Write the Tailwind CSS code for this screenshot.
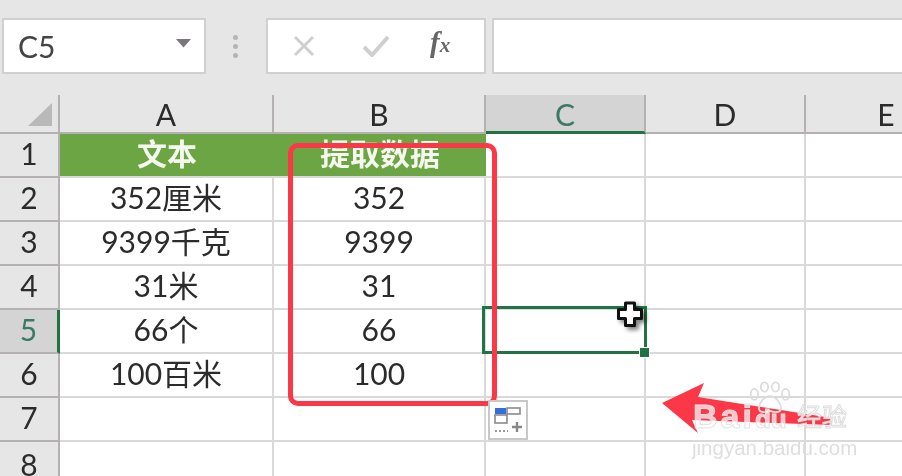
<!DOCTYPE html>
<html lang="zh">
<head>
<meta charset="utf-8">
<title>Excel</title>
<script src="https://cdn.jsdelivr.net/npm/@tailwindcss/browser@4"></script>
</head>
<body class="overflow-hidden">
<div class="relative w-[902px] h-[476px] overflow-hidden bg-white text-[#2b2b2b] text-[30px] font-['Lato','Noto_Sans_CJK_SC',sans-serif] blur-[0.6px]">

  <!-- formula bar -->
  <div class="h-[95px] bg-[#e6e6e6] pt-[18px] flex items-start">
    <div class="ml-[2px] w-[204px] h-[56px] bg-white border-2 border-[#d0d0d0] flex items-center justify-between pl-[14px] pr-[13px] text-[#444]">
      <span>C5</span>
      <svg class="mb-[6px]" width="15" height="9" viewBox="0 0 15 9"><path d="M0 0H15L7.5 8.5Z" fill="#7a767c"/></svg>
    </div>
    <div class="w-[60px] h-[56px] flex flex-col items-center justify-center gap-[4px] pr-[1px]">
      <i class="w-[5px] h-[5px] rounded-full bg-[#b5b5b5]"></i>
      <i class="w-[5px] h-[5px] rounded-full bg-[#b5b5b5]"></i>
      <i class="w-[5px] h-[5px] rounded-full bg-[#b5b5b5]"></i>
    </div>
    <div class="w-[220px] h-[56px] bg-white border-2 border-[#d0d0d0] flex items-center pl-[24px] gap-[46px]">
      <svg width="24" height="22" viewBox="0 0 24 22"><path d="M3 2L21 20M21 2L3 20" stroke="#cfcfcf" stroke-width="3" fill="none"/></svg>
      <svg width="28" height="22" viewBox="0 0 28 22"><path d="M2 12L10 20L26 2" stroke="#cfcfcf" stroke-width="4" fill="none"/></svg>
      <span class="ml-[-6px] mt-[-6px] text-[29px] font-bold italic text-[#666] font-['Liberation_Serif',serif]">f<span class="text-[21px]">x</span></span>
    </div>
    <div class="ml-[6px] flex-1 h-[56px] bg-white border-2 border-r-0 border-[#d0d0d0]"></div>
  </div>

  <!-- sheet -->
  <div class="grid grid-cols-[60px_214px_212px_160px_160px_160px] grid-rows-[39px_repeat(7,44px)] [&>div]:pb-[4px] [&>div:nth-child(-n+6)]:pb-0 [&>div:nth-child(-n+6)]:pt-[2px]">
    <!-- column headers -->
    <div class="bg-[#e6e6e6] border-r-2 border-b-2 border-[#b4b0b4] flex items-end justify-end pr-[6px]">
      <svg class="mb-[6px]" width="24" height="23" viewBox="0 0 24 23"><path d="M24 0V23H0Z" fill="#b9b9b9"/></svg>
    </div>
    <div class="bg-[#e6e6e6] border-r-2 border-b-2 border-[#b4b0b4] flex items-center justify-center">A</div>
    <div class="bg-[#e6e6e6] border-r-2 border-b-2 border-[#b4b0b4] flex items-center justify-center">B</div>
    <div class="bg-[#d4d4d4] border-r-2 border-[#b4b0b4] border-b-[3px] border-b-[#217346] flex items-center justify-center text-[#3c7a63]">C</div>
    <div class="bg-[#e6e6e6] border-r-2 border-b-2 border-[#b4b0b4] flex items-center justify-center">D</div>
    <div class="bg-[#e6e6e6] border-b-2 border-[#b4b0b4] flex items-center justify-center">E</div>

    <!-- row 1 -->
    <div class="bg-[#e6e6e6] border-r-2 border-b-2 border-[#b4b0b4] flex items-center justify-center">1</div>
    <div class="bg-[#6ca644] border-b-2 border-[#d9d9d9] flex items-center justify-center text-[#f6f8f0] font-bold">文本</div>
    <div class="bg-[#6ca644] border-b-2 border-[#d9d9d9] flex items-center justify-center text-[#f6f8f0] font-bold">提取数据</div>
    <div class="border-r-2 border-b-2 border-[#d9d9d9]"></div>
    <div class="border-r-2 border-b-2 border-[#d9d9d9]"></div>
    <div class="border-b-2 border-[#d9d9d9]"></div>

    <!-- row 2 -->
    <div class="bg-[#e6e6e6] border-r-2 border-b-2 border-[#b4b0b4] flex items-center justify-center">2</div>
    <div class="border-r-2 border-b-2 border-[#d9d9d9] flex items-center justify-center">352厘米</div>
    <div class="border-r-2 border-b-2 border-[#d9d9d9] flex items-center justify-center">352</div>
    <div class="border-r-2 border-b-2 border-[#d9d9d9]"></div>
    <div class="border-r-2 border-b-2 border-[#d9d9d9]"></div>
    <div class="border-b-2 border-[#d9d9d9]"></div>

    <!-- row 3 -->
    <div class="bg-[#e6e6e6] border-r-2 border-b-2 border-[#b4b0b4] flex items-center justify-center">3</div>
    <div class="border-r-2 border-b-2 border-[#d9d9d9] flex items-center justify-center">9399千克</div>
    <div class="border-r-2 border-b-2 border-[#d9d9d9] flex items-center justify-center">9399</div>
    <div class="border-r-2 border-b-2 border-[#d9d9d9]"></div>
    <div class="border-r-2 border-b-2 border-[#d9d9d9]"></div>
    <div class="border-b-2 border-[#d9d9d9]"></div>

    <!-- row 4 -->
    <div class="bg-[#e6e6e6] border-r-2 border-b-2 border-[#b4b0b4] flex items-center justify-center">4</div>
    <div class="border-r-2 border-b-2 border-[#d9d9d9] flex items-center justify-center">31米</div>
    <div class="border-r-2 border-b-2 border-[#d9d9d9] flex items-center justify-center">31</div>
    <div class="border-r-2 border-b-2 border-[#d9d9d9]"></div>
    <div class="border-r-2 border-b-2 border-[#d9d9d9]"></div>
    <div class="border-b-2 border-[#d9d9d9]"></div>

    <!-- row 5 -->
    <div class="bg-[#d4d4d4] border-r-[3px] border-r-[#217346] border-b-2 border-b-[#b4b0b4] flex items-center justify-center text-[#3c7a63]">5</div>
    <div class="border-r-2 border-b-2 border-[#d9d9d9] flex items-center justify-center">66个</div>
    <div class="border-r-2 border-b-2 border-[#d9d9d9] flex items-center justify-center">66</div>
    <div class="border-r-2 border-b-2 border-[#d9d9d9]"></div>
    <div class="border-r-2 border-b-2 border-[#d9d9d9]"></div>
    <div class="border-b-2 border-[#d9d9d9]"></div>

    <!-- row 6 -->
    <div class="bg-[#e6e6e6] border-r-2 border-b-2 border-[#b4b0b4] flex items-center justify-center">6</div>
    <div class="border-r-2 border-b-2 border-[#d9d9d9] flex items-center justify-center">100百米</div>
    <div class="border-r-2 border-b-2 border-[#d9d9d9] flex items-center justify-center">100</div>
    <div class="border-r-2 border-b-2 border-[#d9d9d9]"></div>
    <div class="border-r-2 border-b-2 border-[#d9d9d9]"></div>
    <div class="border-b-2 border-[#d9d9d9]"></div>

    <!-- row 7 -->
    <div class="bg-[#e6e6e6] border-r-2 border-b-2 border-[#b4b0b4] flex items-center justify-center">7</div>
    <div class="border-r-2 border-b-2 border-[#d9d9d9]"></div>
    <div class="border-r-2 border-b-2 border-[#d9d9d9]"></div>
    <div class="border-r-2 border-b-2 border-[#d9d9d9]"></div>
    <div class="border-r-2 border-b-2 border-[#d9d9d9]"></div>
    <div class="border-b-2 border-[#d9d9d9]"></div>

    <!-- row 8 -->
    <div class="bg-[#e6e6e6] border-r-2 border-b-2 border-[#b4b0b4] flex items-center justify-center">8</div>
    <div class="border-r-2 border-b-2 border-[#d9d9d9]"></div>
    <div class="border-r-2 border-b-2 border-[#d9d9d9]"></div>
    <div class="border-r-2 border-b-2 border-[#d9d9d9]"></div>
    <div class="border-r-2 border-b-2 border-[#d9d9d9]"></div>
    <div class="border-b-2 border-[#d9d9d9]"></div>
  </div>

  <!-- cell selection and fill handle -->
  <div class="absolute left-[482px] top-[306px] w-[165px] h-[48px] border-[3px] border-[#217346]"></div>
  <div class="absolute left-[639px] top-[347px] w-[11px] h-[11px] bg-[#217346] border border-white"></div>

  <!-- red annotation box -->
  <div class="absolute left-[288px] top-[143px] w-[209px] h-[263px] border-[5px] border-[#fb3748] rounded-[10px]"></div>

  <!-- paste options -->
  <div class="absolute left-[488px] top-[400px] w-[40px] h-[40px] bg-white border-2 border-[#c8c8c8]">
    <svg width="36" height="36" viewBox="0 0 36 36" fill="none">
      <rect x="5" y="6" width="11" height="6" fill="#2f6fe0"/>
      <rect x="17" y="6" width="13" height="6" stroke="#8a8a8a" stroke-width="1.6"/>
      <rect x="5" y="13" width="12" height="8" stroke="#8a8a8a" stroke-width="1.6"/>
      <path d="M5 29H18" stroke="#999" stroke-width="2" stroke-dasharray="2 2"/>
      <path d="M27 20V30M22 25H32" stroke="#888" stroke-width="2.4"/>
    </svg>
  </div>

  <!-- cursor -->
  <svg class="absolute left-[614px] top-[300px] drop-shadow-[3px_3px_2px_rgba(0,0,0,0.5)]" width="34" height="32" viewBox="0 0 34 32">
    <path d="M11.5 3H20.5V9.5H27.5V18.5H20.5V25.5H11.5V18.5H4.5V9.5H11.5Z" fill="#fff" stroke="#111" stroke-width="3" stroke-linejoin="round"/>
  </svg>

  <!-- red arrow -->
  <svg class="absolute left-[655px] top-[378px]" width="180" height="62" viewBox="0 0 180 62">
    <path d="M7 25L49 5L43 19L177 40L177 47L37 42L43 55Z" fill="#fb3748"/>
  </svg>

  <!-- watermark -->
  <div class="absolute left-[690px] top-[378px] w-[200px] h-[98px]">
    <svg class="absolute left-[57px] top-[2px]" width="46" height="38" viewBox="0 0 50 38" fill="none" stroke="#dcdcdc" stroke-width="2">
      <ellipse cx="8" cy="14" rx="4" ry="6"/>
      <ellipse cx="19" cy="6" rx="4" ry="5"/>
      <ellipse cx="31" cy="6" rx="4" ry="5"/>
      <ellipse cx="42" cy="14" rx="4" ry="6"/>
      <path d="M25 16C18 16 13 24 13 29C13 34 20 34 25 32C30 34 37 34 37 29C37 24 32 16 25 16Z"/>
    </svg>
    <span class="absolute left-[3px] top-[16px] text-[34px] leading-[44px] font-bold tracking-[3px] text-white/70 [-webkit-text-stroke:1px_#e2e2e2] font-['Liberation_Sans',sans-serif]">Bai<span class="text-[26px] tracking-normal">du</span></span>
    <span class="absolute left-[107px] top-[20px] text-[25px] leading-[34px] text-white/80 [-webkit-text-stroke:1px_#dcdcdc] font-['Noto_Sans_CJK_SC',sans-serif]">经验</span>
    <span class="absolute left-[2px] top-[56px] text-[20.5px] leading-[28px] text-[#dedede] font-['Liberation_Sans',sans-serif]">jingyan.baidu.com</span>
  </div>
</div>
</body>
</html>
